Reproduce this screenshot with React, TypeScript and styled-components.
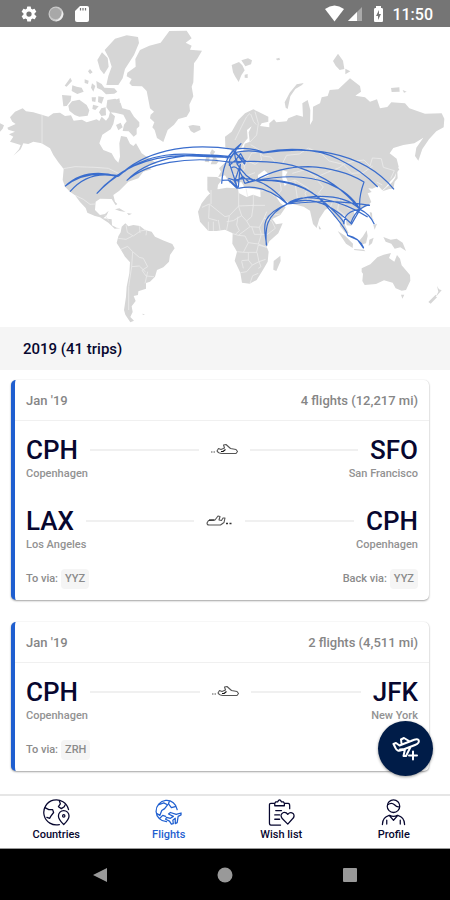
import React from "react";
import styled, { createGlobalStyle } from "styled-components";

const navy = "#07072f";
const blue = "#1f5fd0";

const GlobalStyle = createGlobalStyle`
  * { box-sizing: border-box; }
  body { margin: 0; background: #fff; font-family: Roboto, "Noto Sans", sans-serif; }
  button { font: inherit; border: 0; padding: 0; background: none; cursor: pointer; }
`;

const Screen = styled.div`
  display: flex;
  flex-direction: column;
  min-height: 100vh;
  background: #fff;
`;

const StatusBar = styled.header`
  display: flex;
  align-items: center;
  justify-content: space-between;
  height: 27px;
  padding: 0 17px 0 20px;
  background: #757575;
  color: #fff;
`;

const StatusGroup = styled.div<{ $gap: number }>`
  display: flex;
  align-items: center;
  gap: ${(p) => p.$gap}px;
`;

const Clock = styled.time`
  padding-top: 2px;
  font-size: 16px;
  font-weight: 500;
  line-height: 18px;
`;

const MapArea = styled.section`
  background: #fff;
  svg { display: block; width: 100%; height: auto; }
`;

const YearHeading = styled.h2`
  margin: 0;
  padding: 1px 23px 0;
  background: #f5f5f5;
  color: ${navy};
  font-size: 15px;
  font-weight: 500;
  line-height: 42px;
`;

const TripArea = styled.main`
  position: relative;
  flex: 1;
`;

const TripList = styled.div`
  display: flex;
  flex-direction: column;
  gap: 22px;
  padding: 10px 21px 20px 11px;
`;

const Card = styled.article`
  border-left: 4px solid ${blue};
  border-radius: 5px;
  background: #fff;
  box-shadow: 0 1px 2px rgba(0, 0, 0, 0.36), 0 0 1px rgba(0, 0, 0, 0.12);
`;

const CardHeader = styled.div`
  display: flex;
  justify-content: space-between;
  padding: 1px 11px 0;
  border-bottom: 1px solid #f0f0f0;
  color: #868686;
  font-size: 13px;
  font-weight: 500;
  line-height: 39px;
`;

const CardBody = styled.div`
  display: flex;
  flex-direction: column;
  gap: 23px;
  padding: 13px 11px 11px;
`;

const Leg = styled.div`
  display: flex;
  flex-direction: column;
`;

const Route = styled.div`
  display: flex;
  align-items: center;
  gap: 12px;
`;

const Code = styled.span`
  color: ${navy};
  font-size: 26px;
  font-weight: 500;
  line-height: 32px;
`;

const Track = styled.span`
  flex: 1;
  height: 2px;
  background: #f0f0f0;
`;

const Cities = styled.div`
  display: flex;
  justify-content: space-between;
  color: #929292;
  font-size: 11px;
  font-weight: 500;
  line-height: 16px;
`;

const ViaRow = styled.div`
  display: flex;
  justify-content: space-between;
  margin-top: -7px;
  color: #8b8b8b;
  font-size: 11px;
  font-weight: 500;
  line-height: 20px;
`;

const Via = styled.div`
  display: flex;
  gap: 3px;
`;

const Chip = styled.span`
  padding: 0 4px;
  border-radius: 4px;
  background: #f5f5f5;
`;

const AddButton = styled.button`
  position: absolute;
  right: 17px;
  bottom: 18px;
  display: grid;
  place-items: center;
  width: 55px;
  height: 55px;
  border-radius: 50%;
  background: #001c48;
  box-shadow: 0 1px 3px rgba(0, 0, 0, 0.4);
`;

const TabBar = styled.nav`
  display: grid;
  grid-template-columns: repeat(4, 1fr);
  height: 55px;
  border-top: 2px solid #e6e6e6;
  border-bottom: 1px solid #999;
  background: #fff;
`;

const Tab = styled.button<{ $active?: boolean }>`
  && {
    display: flex;
    flex-direction: column;
    align-items: center;
    padding-top: 3px;
    gap: 2px;
    color: ${(p) => (p.$active ? blue : navy)};
    font-size: 11px;
    font-weight: 500;
    line-height: 14px;
  }
`;

const SystemBar = styled.footer`
  display: grid;
  grid-template-columns: repeat(3, 125px);
  justify-content: center;
  height: 51px;
  background: #000;
`;

const SystemButton = styled.button`
  display: grid;
  place-items: center;
`;

const landmasses = [
  // North America
  "M22 383L47 372L37 365L30 352L45 335L68 325L78 334L100 337L125 344L145 350L160 340L180 338L195 348L213 346L221 362L246 359L260 367L290 358L298 363L305 350L318 362L326 352L330 336L345 349L340 372L332 388L307 404L298 430L310 450L335 460L345 478L355 488L360 470L358 430L363 408L380 411L390 431L400 438L408 430L425 460L440 470L470 490L440 497L455 508L430 515L415 535L385 545L370 560L358 572L340 585L345 605L352 612L347 616L335 597L300 596L287 605L285 630L300 645L315 642L326 632L320 646L310 655L335 658L336 676L350 683L361 685L344 686L325 668L300 652L285 648L262 638L257 624L240 606L225 586L210 575L195 560L188 540L191 507L175 487L160 465L150 445L125 430L100 425L85 432L70 430L62 448L40 467L57 448L62 435L45 430L30 425L40 410L27 403L45 395L25 389Z",
  "M0 370L12 376L8 386L0 395Z",
  // Greenland
  "M382 218L407 200L406 177L420 150L448 137L482 128L508 93L560 92L575 115L557 128L575 137L570 149L606 152L592 176L582 190L580 247L575 260L580 289L568 314L570 333L560 350L535 357L522 374L503 390L490 426L471 414L464 390L457 382L463 367L450 355L452 344L462 335L450 325L440 273L426 259L396 258L388 250L395 237L380 229Z",
  // Arctic archipelago
  "M314 150L345 116L380 106L414 111L417 129L402 165L375 207L368 235L355 255L319 255L325 228L335 200L327 175Z",
  "M306 157L323 174L326 200L312 223L300 208L292 180Z",
  "M270 207L278 217L270 222L264 214Z M211 233L216 243L200 260L194 257Z M217 256L230 260L245 263L251 275L232 282L215 273Z M254 238L266 242L264 252L254 249Z M276 250L286 258L280 275L273 263Z M289 243L305 252L313 263L343 265L352 275L343 281L318 283L305 270L291 264Z",
  "M186 285L214 287L212 302L200 318L190 319Z M205 317L216 304L238 299L260 315L268 331L263 347L238 350L224 345L208 332Z M275 292L288 292L286 306L276 304Z M295 289L312 292L305 311L294 306Z M279 314L296 319L286 330L277 327Z M304 325L317 322L318 346L304 348L297 337Z",
  "M322 300L346 296L362 309L367 325L390 331L402 350L418 367L418 379L410 386L410 403L401 410L386 394L368 393L372 374L380 364L370 344L345 338L330 337L319 322Z M348 375L362 368L368 382L355 391Z M347 299L358 295L360 307L350 308Z",
  "M565 378L579 375L600 378L602 389L582 399L572 393Z",
  // Caribbean
  "M345 628L358 625L377 636L359 633Z M381 639L396 641L386 646Z M427 941L435 943L429 945Z",
  // South America
  "M365 680L376 670L385 679L400 675L420 678L435 690L455 695L465 710L492 722L517 732L524 745L510 765L507 785L490 802L471 810L465 830L450 845L438 849L438 866L415 874L414 885L401 888L407 903L395 919L398 936L391 951L402 962L391 967L376 944L372 930L378 890L380 860L388 820L390 787L375 770L360 745L350 729L355 709L362 697Z",
  // Africa
  "M620 590L640 570L680 563L714 565L716 579L740 591L759 584L788 594L800 630L814 653L828 673L848 670L835 700L808 724L800 740L806 755L803 785L790 808L770 840L749 851L726 848L721 818L704 782L711 755L697 731L698 700L675 689L650 693L625 693L600 665L594 635L605 610Z",
  "M841 767L842 783L829 813L820 809L821 783Z",
  // Britain, Iberia
  "M636 448L646 455L640 463L656 484L649 493L632 493L639 475L630 459Z M620 467L629 470L627 487L614 485Z",
  "M622 530L651 531L665 540L654 555L651 577L631 582L622 570Z",
  // Eurasia
  "M657 505L673 490L688 479L700 465L691 448L676 442L675 410L695 395L715 360L735 340L760 328L775 335L805 350L805 365L785 370L780 378L808 382L808 370L822 358L829 367L860 364L865 355L890 345L909 350L907 310L923 300L931 330L930 375L938 361L939 320L960 310L965 292L983 288L989 270L1015 268L1038 246L1050 235L1080 258L1083 275L1066 287L1095 292L1110 305L1131 298L1140 325L1162 321L1174 307L1215 310L1228 325L1275 341L1325 340L1333 356L1331 382L1309 394L1287 418L1267 447L1255 482L1245 468L1249 443L1270 413L1243 430L1210 435L1180 444L1169 460L1190 476L1196 500L1183 531L1170 545L1158 561L1147 571L1135 558L1117 566L1105 565L1115 576L1103 580L1114 606L1105 615L1080 630L1060 630L1066 650L1054 677L1040 676L1036 648L1026 644L1031 667L1046 699L1036 698L1020 679L1018 659L1002 650L989 622L975 630L958 656L950 684L939 672L930 632L911 620L870 610L844 595L825 585L841 609L857 622L841 645L805 663L794 635L782 602L781 570L765 568L735 563L724 546L714 548L705 563L692 537L690 551L675 526L654 532L663 515Z",
  "M857 323L854 307L869 278L890 253L911 249L906 255L886 267L871 289L863 327Z",
  "M695 195L717 186L727 196L734 211L724 226L716 246L705 229L699 217Z M724 181L744 175L756 181L753 193L736 199Z M734 224L743 222L743 234L734 233Z M828 176L838 173L840 180L831 181Z M999 183L1014 161L1029 182L1033 207L1019 210L1007 197Z M1036 206L1051 214L1036 223Z M1173 264L1198 262L1199 275L1175 276Z M1208 270L1220 275L1212 278Z",
  // Japan and south-east Asia
  "M1191 500L1198 508L1192 516L1193 535L1184 545L1180 566L1168 567L1147 574L1164 558L1177 546L1186 533Z",
  "M1075 725L1088 710L1100 691L1103 708L1098 730L1082 734Z M1013 693L1035 707L1059 731L1058 744L1038 731Z M1063 747L1092 749L1096 754L1062 750Z M1108 719L1121 713L1116 730L1106 738Z M1109 636L1116 638L1117 654L1125 665L1112 651Z M1120 675L1131 671L1124 689Z M1150 711L1172 719L1190 716L1208 728L1218 753L1201 742L1184 746L1174 731L1157 725Z M956 676L964 688L957 688Z",
  // Oceania
  "M1085 805L1111 793L1132 772L1151 764L1173 759L1167 774L1183 785L1191 765L1200 776L1205 796L1230 825L1231 842L1218 870L1205 872L1187 865L1178 848L1152 841L1128 852L1094 855L1087 843L1089 821L1085 816Z M1203 884L1213 884L1207 896Z M1311 858L1317 868L1325 871L1307 891L1315 875Z M1307 884L1311 892L1292 911L1285 906Z",
];

const seas = [
  "M731 430L743 415L741 390L755 379L746 397L749 425L734 431L729 455L710 459L700 448L722 448Z",
  "M774 525L793 511L809 525L793 532L774 534Z",
  "M847 511L863 515L856 527L865 548L854 558L847 536Z",
];

const borders = [
  "M126 344V431M190 506L225 500L285 502L325 505L345 515L360 522",
  "M225 586L250 598L270 613L286 612M315 646L326 662",
  "M378 675L382 697L400 708L421 693L438 690M355 715L378 718L398 708M363 748L383 739L398 755L418 772L430 775L443 800L426 811L438 828L462 830M398 755L395 800L386 860L386 930M395 800L418 798L437 816M418 678L420 699M440 690L438 706M435 850L443 815",
  "M606 622L628 612L675 650L688 647L716 618L760 616V584M633 570V612M716 577V620L725 647L700 662L680 665M628 612L626 655L652 662M625 665V693M640 665L640 693M655 660L660 690M688 647L680 690M760 616L755 650L740 663L725 647M755 616H795M740 663L750 680L778 682L792 655L800 635M698 701L715 706L750 680M712 755L730 757L745 728L735 708L715 706M745 728L775 732L784 703L778 682M725 782L745 780L745 757L730 757M775 732L800 742M745 780L757 795L777 785L771 757L745 757M757 795L740 815L722 818M775 805L783 800L777 785L797 778M800 742L775 735L770 756M750 850L758 827L775 820M792 655L815 662L826 685L801 704L784 703M714 650L710 675L718 692L706 703M738 565L743 590M725 784L730 805M755 680L763 703L784 703",
  "M705 420L725 379L740 350L750 340M752 342L761 365L769 374M765 335L775 370L770 405L750 426M752 434L778 450L788 468L812 471L826 487L847 491M755 459L780 457L785 480L765 493L742 483L755 459M690 495L710 503L730 489L735 505L720 518L744 526L765 518M695 520L710 525L712 540M742 483L732 500",
  "M847 491L860 466L898 462L925 444L965 462L988 483L1030 493L1060 484L1092 480L1110 498L1117 474L1144 476L1150 502L1183 512L1172 536M877 520L915 509L948 532L982 517L1018 503L1030 494M1030 494L1055 520L1090 518L1118 498M945 534L970 561L955 580L978 597L1000 598L1020 593L1044 625L1060 625M1000 598L990 625M1018 597L1013 630L1040 650M860 548L885 540L925 565L915 580L927 607L900 611M884 541L892 594L880 604M822 543L840 548L844 570L832 586M780 574L800 570L825 590M802 660L820 645L841 642M1147 555L1130 546M927 607L950 590L970 592",
];

const routes = [
  "M195 559Q255 502 355 529M195 559Q255 509 355 527M210 575Q265 509 355 529M290 581Q328 540 377 512",
  "M355 529C430 455 550 426 703 448M355 529C440 455 540 453 680 473M380 542C440 490 560 467 688 486M380 542C440 480 550 452 695 470M290 581C350 511 440 468 550 467L684 472",
  "M703 448Q745 439 790 457C860 442 950 444 1015 477Q1085 511 1133 561M703 458Q750 447 790 459C910 440 1080 445 1182 568",
  "M682 487C760 480 850 486 896 502Q1010 540 1080 628M765 542Q835 500 925 500Q1025 505 1092 546Q1075 593 1080 628",
  "M765 542Q900 515 985 550Q1050 577 1080 628M765 542Q890 535 965 600T1030 672M765 542Q900 529 970 608T1043 706L1073 720L1091 745",
  "M700 542Q778 515 862 612Q900 593 940 590Q1035 584 1080 628M862 612C905 572 1025 600 1103 651M862 612Q955 573 1055 672L1080 628M862 612C970 600 1030 603 1110 616",
  "M715 565Q791 547 862 612C790 648 797 695 799 735M862 612C770 650 796 690 800 737",
  "M1080 628Q1030 634 1032 673M1080 628Q1063 640 1052 670M1080 628Q1110 642 1123 673M1080 628Q1100 613 1110 616M1043 706Q1077 713 1091 743",
  "M689 475L723 431L702 450L707 480L722 461L733 481L703 458L689 479L688 496L710 478L711 490L736 482L734 492L700 450L680 475M702 450Q669 483 665 551M665 541L685 540L711 565M688 489L712 562L704 545L721 493L715 562M695 503Q715 490 734 550M710 490Q738 534 765 542M734 550L765 542M685 535L713 543L728 529L747 546L765 539M714 565L690 541",
];

const WorldMap = () => (
  <svg viewBox="0 81 1350 900" role="img" aria-label="World map of flown routes">
    <path d={landmasses.join(" ")} fill="#d6d6d6" />
    <path d={seas.join(" ")} fill="#fff" />
    <path d={borders.join(" ")} fill="none" stroke="#eaeaea" strokeWidth="2.5" />
    <path d={routes.join(" ")} fill="none" stroke="#3a6dcd" strokeWidth="3.6" strokeLinejoin="round" />
  </svg>
);

const PlaneRight = () => (
  <svg width="27" height="14" viewBox="0 0 27 14" fill="none" stroke="#555" strokeWidth="1.1" strokeLinejoin="round" aria-hidden="true">
    <path d="M0 9H5" strokeDasharray="1.500 1" />
    <path d="M6 8L7.500 5.500L10 6.500L13.500 5L12.500 2L15 1.500L19.500 5.500L25 6.500L26.500 8.500L25 10.500H11Q7.500 10.500 6 8Z" />
    <path d="M10 8.500H12L14.500 6.500" stroke="#111" />
  </svg>
);

const PlaneLeft = () => (
  <svg width="27" height="14" viewBox="0 0 27 14" fill="none" stroke="#555" strokeWidth="1.1" strokeLinejoin="round" aria-hidden="true">
    <path d="M20 9.500H27" stroke="#333" strokeWidth="1.500" strokeDasharray="2 1.500" />
    <path d="M1 9L2.500 6.500L9 6L12 2L14 2.500L13 6L15.500 6.500L17 4L19 4L18 8.500L14.500 11H3Q1 11 1 9Z" />
    <path d="M3 6H8.500" stroke="#111" />
  </svg>
);

const AddPlaneIcon = () => (
  <svg width="28" height="28" viewBox="0 0 28 28" fill="none" stroke="#fff" strokeWidth="2" strokeLinejoin="round" strokeLinecap="round" aria-hidden="true">
    <path d="M1.500 9L4 8L7.500 10.500L19 6Q25 3 26.500 5Q28 8 23 10L10 15Q5 17 3.500 13ZM9.500 8.500L9 4.500L12 3L17 6M8 14.500L13 14L11.500 21L14 21L18.500 12" />
    <path d="M21 16.500V24.500M17 20.500H25" />
  </svg>
);

const TabSvg = styled.svg.attrs({
  width: 27,
  height: 27,
  viewBox: "0 0 28 28",
  fill: "none",
  stroke: "currentColor",
  strokeWidth: 1.3,
  strokeLinejoin: "round",
  strokeLinecap: "round",
  "aria-hidden": true,
})``;

const GlobePinIcon = () => (
  <TabSvg>
    <path d="M26.500 11A13 13 0 1 0 17 26.500" />
    <path d="M2 9L6 11L10 11L11 14L8 18L7 20L4 19M17 2L18 5L16 8L19 10L22 8L23 6" />
    <path d="M21.500 26.500Q16 21 16 17.500A5.500 5.500 0 0 1 27 17.500Q27 21 21.500 26.500Z" />
    <circle cx="21.500" cy="17.500" r="1.200" />
  </TabSvg>
);

const GlobePlaneIcon = () => (
  <TabSvg>
    <path d="M23 11A11 11 0 1 0 12 23.500M4 6L9 4L13 6L10 10L7 12L5 17L2 15M15 2L14 5L17 9L21 8M5 20L8 17L11 18" />
    <path d="M27 14.500L22 16L16 14L14 15.500L19 18L16 20L12 19L11 21L15 23L17 26L19 25.500L18.500 22L21 20L21 25.500L23 24.500L24 18L27 16.500Z" />
  </TabSvg>
);

const WishIcon = () => (
  <TabSvg>
    <path d="M13 27H3Q1.500 27 1.500 25V6Q1.500 4.500 3 4.500H7L8 3L10 3Q12 -1 14 3H16L17 4.500H21Q22.500 4.500 22.500 7V10M7 4.500V7H17V4.500M8 12H14M7 16.500H12M7 21H12" />
    <path d="M20.500 26L14.500 20Q12 16 16 14Q19 13.500 20.500 16Q23 13 26 15Q28.500 18 25 21Z" />
  </TabSvg>
);

const ProfileIcon = () => (
  <TabSvg>
    <circle cx="14" cy="7.500" r="6.500" />
    <path d="M8 6Q12 3 15 6T20 8M2.500 26.500Q2.500 19 9.500 17L14 22L18.500 17Q25.500 19 25.500 26.500M7 26V22M21 26V22M10 17Q14 19 18 17" />
  </TabSvg>
);

interface LegData {
  from: string;
  fromCity: string;
  to: string;
  toCity: string;
  back?: boolean;
}

interface TripData {
  date: string;
  summary: string;
  legs: LegData[];
  toVia: string;
  backVia?: string;
}

const trips: TripData[] = [
  {
    date: "Jan '19",
    summary: "4 flights (12,217 mi)",
    legs: [
      { from: "CPH", fromCity: "Copenhagen", to: "SFO", toCity: "San Francisco" },
      { from: "LAX", fromCity: "Los Angeles", to: "CPH", toCity: "Copenhagen", back: true },
    ],
    toVia: "YYZ",
    backVia: "YYZ",
  },
  {
    date: "Jan '19",
    summary: "2 flights (4,511 mi)",
    legs: [{ from: "CPH", fromCity: "Copenhagen", to: "JFK", toCity: "New York" }],
    toVia: "ZRH",
  },
];

const TripCard = ({ trip }: { trip: TripData }) => (
  <Card>
    <CardHeader>
      <span>{trip.date}</span>
      <span>{trip.summary}</span>
    </CardHeader>
    <CardBody>
      {trip.legs.map((leg) => (
        <Leg key={leg.from + leg.to}>
          <Route>
            <Code>{leg.from}</Code>
            <Track />
            {leg.back ? <PlaneLeft /> : <PlaneRight />}
            <Track />
            <Code>{leg.to}</Code>
          </Route>
          <Cities>
            <span>{leg.fromCity}</span>
            <span>{leg.toCity}</span>
          </Cities>
        </Leg>
      ))}
      <ViaRow>
        <Via>To via: <Chip>{trip.toVia}</Chip></Via>
        {trip.backVia && <Via>Back via: <Chip>{trip.backVia}</Chip></Via>}
      </ViaRow>
    </CardBody>
  </Card>
);

export default function App() {
  return (
    <Screen>
      <GlobalStyle />
      <StatusBar>
        <StatusGroup $gap={10}>
          <svg width="18" height="18" viewBox="0 0 24 24" fill="#fff" aria-hidden="true">
            <path fillRule="evenodd" d="M19.400 13a7.800 7.800 0 0 0 0-2l2.100-1.600a.5.5 0 0 0 .1-.7l-2-3.400a.5.5 0 0 0-.6-.2l-2.500 1a7.300 7.300 0 0 0-1.700-1L14.400 2.400A.5.5 0 0 0 14 2h-4a.5.5 0 0 0-.5.4l-.4 2.700a7.600 7.600 0 0 0-1.700 1l-2.500-1a.5.5 0 0 0-.6.2l-2 3.400a.5.5 0 0 0 .1.7L4.600 11a8 8 0 0 0 0 2l-2.100 1.600a.5.5 0 0 0-.1.7l2 3.400c.1.200.4.300.6.200l2.500-1a7.300 7.300 0 0 0 1.700 1l.4 2.700c0 .2.2.4.500.4h4c.2 0 .4-.2.500-.4l.4-2.700a7.600 7.600 0 0 0 1.700-1l2.500 1c.2.100.5 0 .6-.2l2-3.400a.5.5 0 0 0-.1-.7ZM12 15.500a3.500 3.500 0 1 1 0-7 3.500 3.500 0 0 1 0 7Z" />
          </svg>
          <svg width="16" height="16" viewBox="0 0 16 16" aria-hidden="true">
            <circle cx="8" cy="8" r="7.500" fill="#c9c9c9" />
            <circle cx="7.500" cy="7.500" r="5.800" fill="#a8a8a8" />
            <path d="M14.500 5A7 7 0 0 1 7 15Q13 13.500 14.500 5Z" fill="#eee" />
          </svg>
          <svg width="16" height="18" viewBox="0 0 16 18" aria-hidden="true">
            <path d="M6 1H13Q15 1 15 3V15Q15 17 13 17H3Q1 17 1 15V6Z" fill="#fff" />
            <path d="M6.500 3V5.500M9 3V5.500M11.500 3V5.500" stroke="#757575" strokeWidth="1.200" />
          </svg>
        </StatusGroup>
        <StatusGroup $gap={3}>
          <svg width="19" height="17" viewBox="0 0 19 17" aria-hidden="true">
            <path d="M0 4Q9.500 -3 19 4L9.500 16.500Z" fill="#fff" />
          </svg>
          <svg width="16" height="16" viewBox="0 0 16 16" aria-hidden="true">
            <path d="M15 1V15H1Z" fill="#aaa" />
            <path d="M10 6V15H1Z" fill="#fff" />
          </svg>
          <svg width="23" height="18" viewBox="0 0 23 18" aria-hidden="true">
            <path d="M10 1H15V3H16Q17 3 17 4.500V15.500Q17 17 16 17H9Q8 17 8 15.500V4.500Q8 3 9 3H10Z" fill="#fff" />
            <path d="M13 5L10 11H12V15L15 9H13Z" fill="#757575" />
          </svg>
          <Clock>11:50</Clock>
        </StatusGroup>
      </StatusBar>
      <MapArea><WorldMap /></MapArea>
      <YearHeading>2019 (41 trips)</YearHeading>
      <TripArea>
        <TripList>
          {trips.map((trip) => <TripCard key={trip.summary} trip={trip} />)}
        </TripList>
        <AddButton aria-label="Add flight"><AddPlaneIcon /></AddButton>
      </TripArea>
      <TabBar>
        <Tab><GlobePinIcon />Countries</Tab>
        <Tab $active aria-current="page"><GlobePlaneIcon />Flights</Tab>
        <Tab><WishIcon />Wish list</Tab>
        <Tab><ProfileIcon />Profile</Tab>
      </TabBar>
      <SystemBar>
        <SystemButton aria-label="Back">
          <svg width="14" height="16" viewBox="0 0 14 16" aria-hidden="true"><path d="M14 1V15L0 8Z" fill="#999" /></svg>
        </SystemButton>
        <SystemButton aria-label="Home">
          <svg width="16" height="16" viewBox="0 0 16 16" aria-hidden="true"><circle cx="8" cy="8" r="7.500" fill="#999" /></svg>
        </SystemButton>
        <SystemButton aria-label="Recent apps">
          <svg width="14" height="14" viewBox="0 0 14 14" aria-hidden="true"><rect width="14" height="14" rx="1" fill="#999" /></svg>
        </SystemButton>
      </SystemBar>
    </Screen>
  );
}
